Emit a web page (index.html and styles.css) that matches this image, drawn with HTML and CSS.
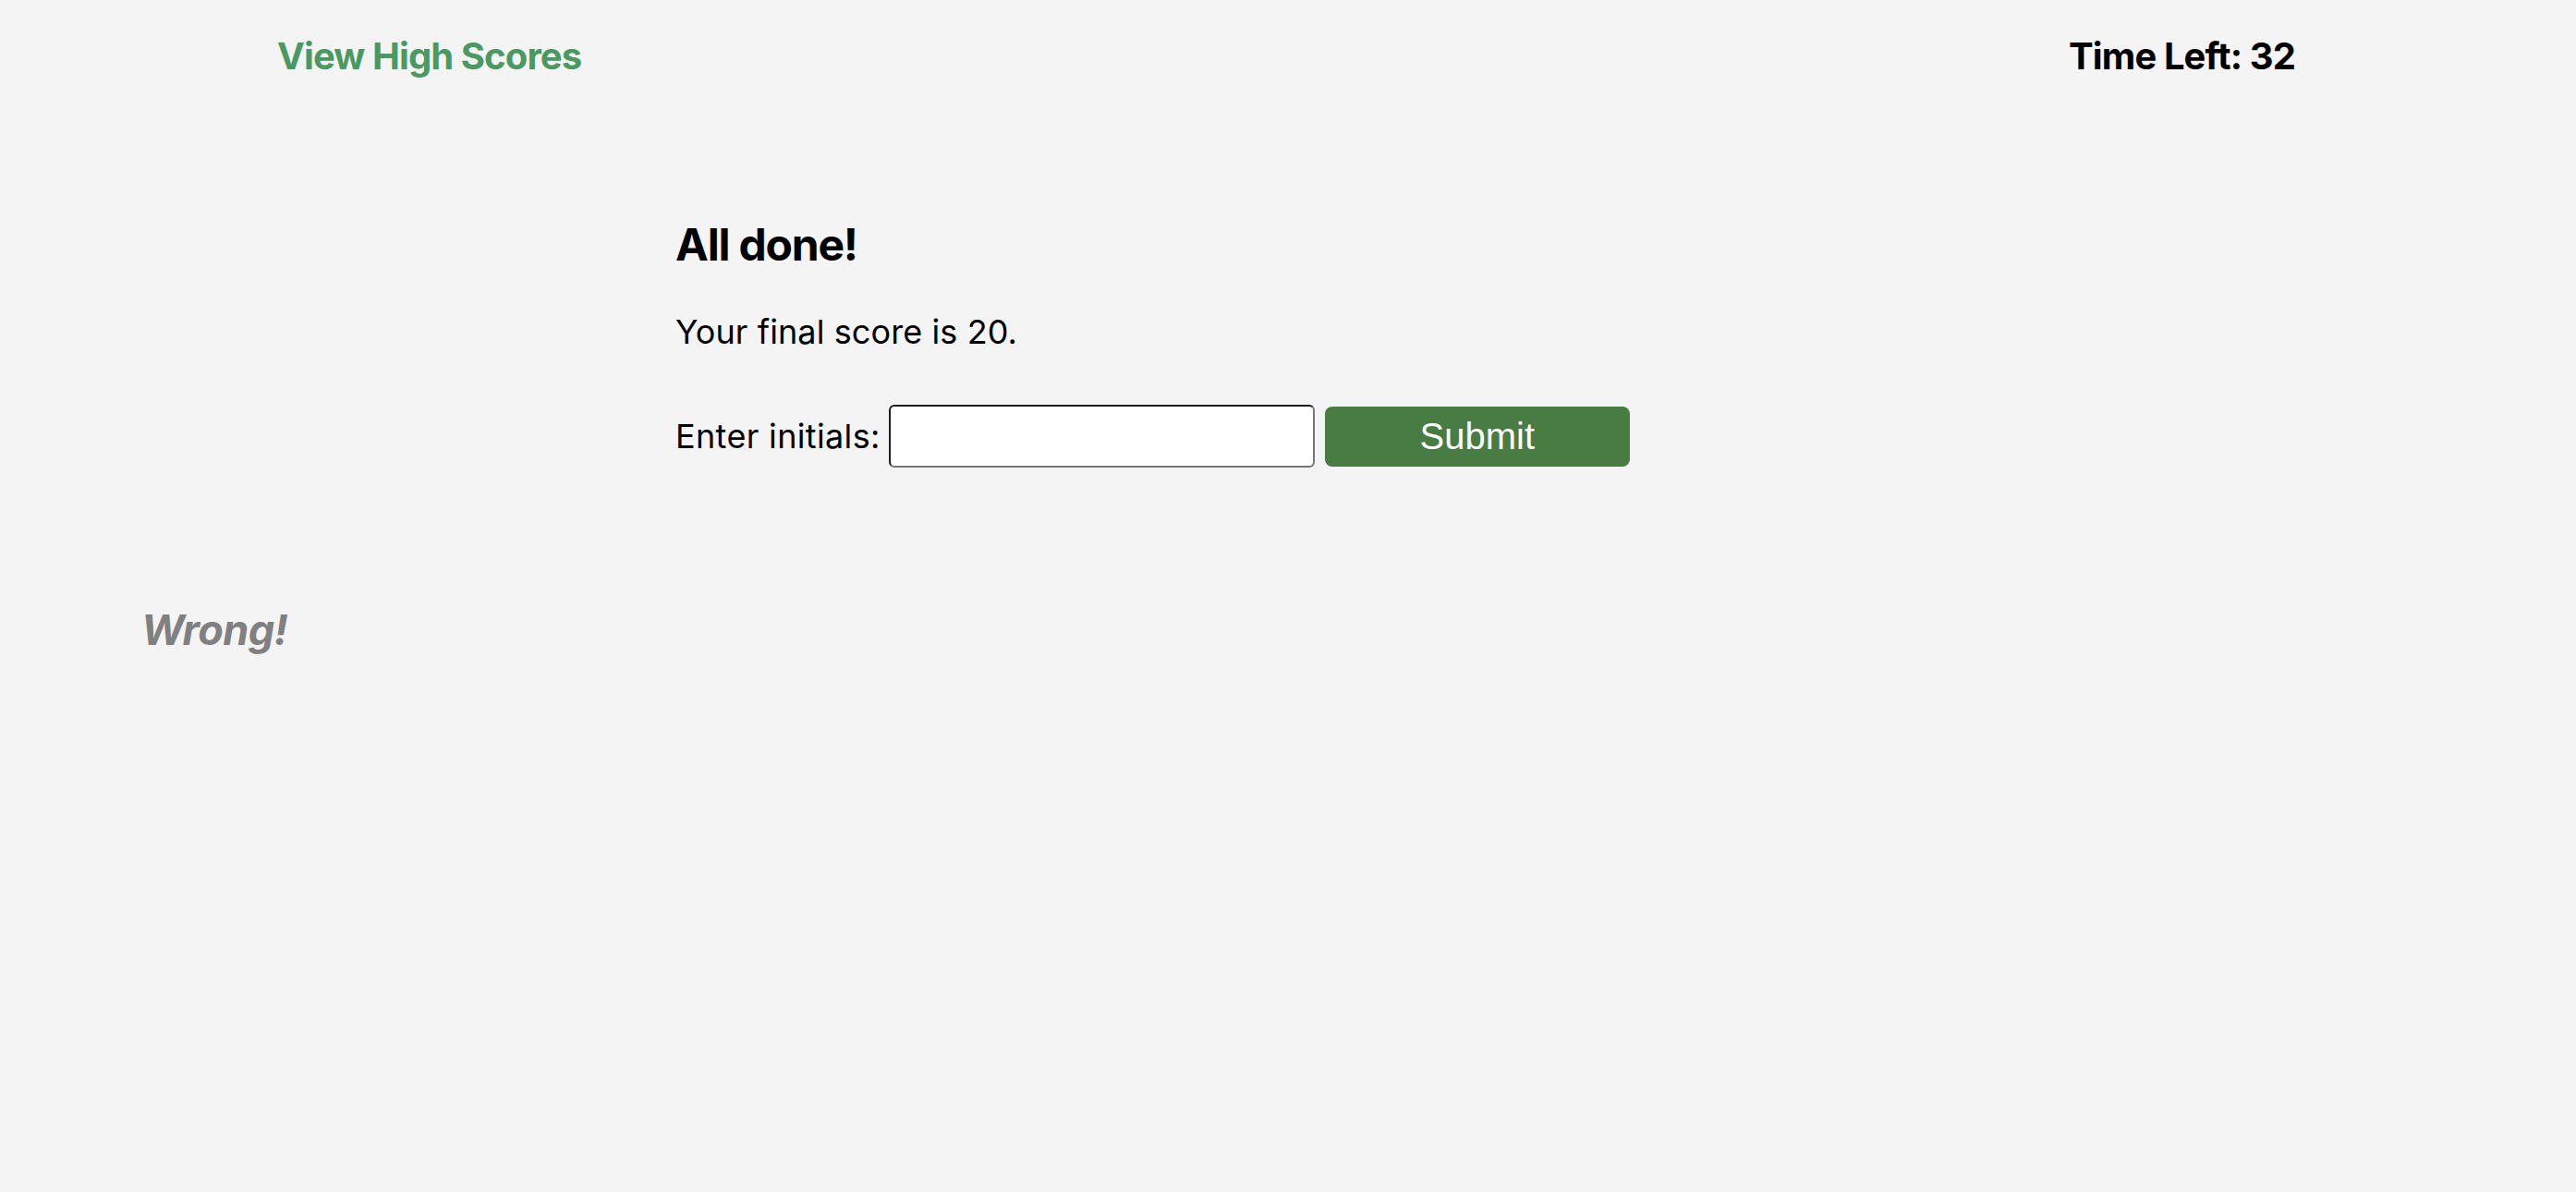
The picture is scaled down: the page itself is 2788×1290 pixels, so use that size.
FILE: index.html
```html
<!DOCTYPE html>
<html lang="en">
<head>
<meta charset="utf-8">
<title>Code Quiz</title>
<link rel="stylesheet" href="styles.css">
</head>
<body>
  <header class="topbar">
    <a class="highscores" href="#">View High Scores</a>
    <div class="timer">Time Left: <span>32</span></div>
  </header>
  <main class="done">
    <h2 class="done-title">All done!</h2>
    <p class="done-score">Your final score is 20.</p>
    <form class="done-form">
      <label class="done-label" for="initials">Enter initials:</label>
      <input class="done-input" id="initials" type="text">
      <button class="done-submit" type="button">Submit</button>
    </form>
  </main>
  <div class="feedback">Wrong!</div>
</body>
</html>
```
FILE: styles.css
```css
html, body {
  margin: 0;
  padding: 0;
}
body {
  background: #f4f4f4;
  font-family: Inter, "Noto Sans", sans-serif;
  color: #000;
  min-height: 1290px;
}
.topbar {
  display: flex;
  justify-content: space-between;
  align-items: flex-start;
  padding: 37px 304px 0 300px;
  font-size: 40px;
  font-weight: 700;
  line-height: 48px;
  letter-spacing: -0.9px;
}
.highscores {
  color: #4b9962;
  text-decoration: none;
}
.timer {
  color: #000;
}
.done {
  padding: 151px 0 0 731px;
}
.done-title {
  margin: 0;
  font-size: 48px;
  line-height: 58px;
  font-weight: 700;
  letter-spacing: -1.2px;
}
.done-score {
  margin: 43px 0 0;
  font-size: 36px;
  line-height: 44px;
  letter-spacing: 0.1px;
}
.done-form {
  margin-top: 57px;
  display: flex;
  align-items: center;
}
.done-label {
  font-size: 36px;
  line-height: 44px;
  letter-spacing: 0.35px;
  margin-right: 9px;
}
.done-input {
  box-sizing: border-box;
  width: 461px;
  height: 68px;
  margin: 0;
  border-style: solid;
  border-width: 2px;
  border-color: #1c1c1c #767676 #767676 #1c1c1c;
  border-radius: 6px;
  background: #fff;
  font-size: 36px;
  padding: 0 8px;
}
.done-submit {
  box-sizing: border-box;
  width: 330px;
  height: 65px;
  margin-left: 11px;
  border: none;
  border-radius: 8px;
  background: #487c42;
  color: #fff;
  font-family: "Liberation Sans", Arial, sans-serif;
  font-size: 40px;
  padding: 0;
}
.feedback {
  margin-top: 148px;
  padding-left: 153px;
  font-size: 45px;
  line-height: 56px;
  font-weight: 700;
  font-style: italic;
  letter-spacing: -0.6px;
  color: #808080;
}
```
